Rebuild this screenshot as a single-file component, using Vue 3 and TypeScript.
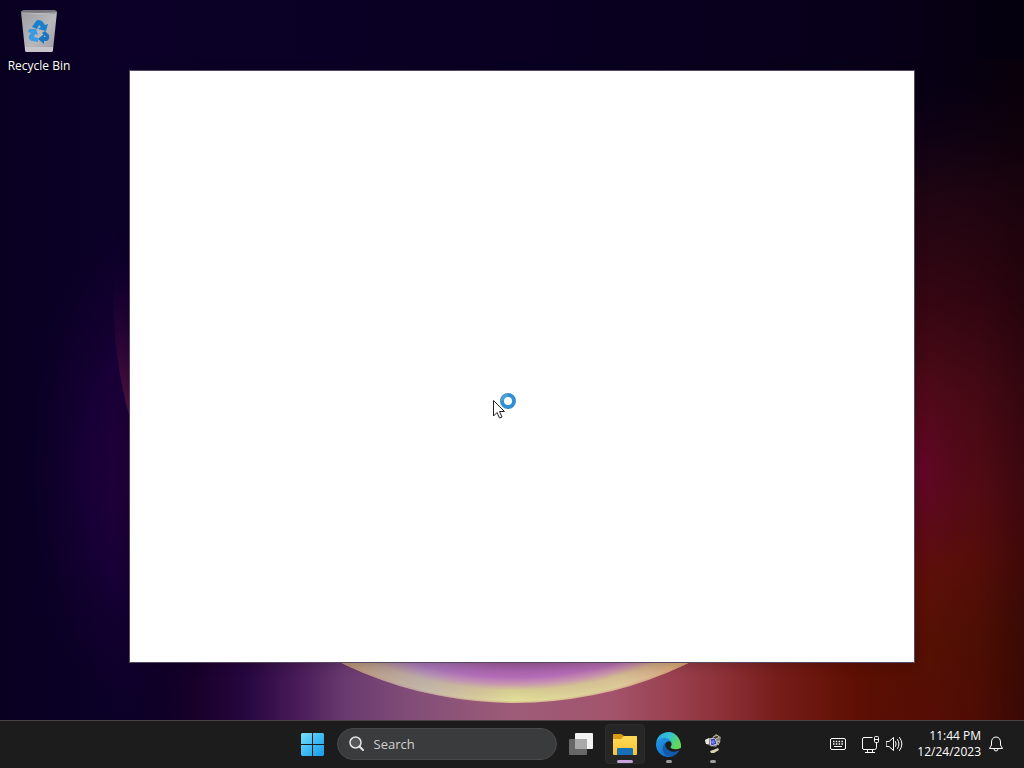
<script setup lang="ts">
import { ref } from 'vue'

interface RunningApp {
  id: string
  name: string
  state: 'none' | 'active' | 'open'
}

const query = ref('')
const time = '11:44 PM'
const date = '12/24/2023'
const apps: RunningApp[] = [
  { id: 'taskview', name: 'Task view', state: 'none' },
  { id: 'explorer', name: 'File Explorer', state: 'active' },
  { id: 'edge', name: 'Microsoft Edge', state: 'open' },
  { id: 'setup', name: 'Setup', state: 'open' },
]
</script>

<template>
  <div class="screen">
    <main class="desktop">
      <svg class="wallpaper" viewBox="0 0 1024 720" preserveAspectRatio="none" aria-hidden="true">
        <defs>
          <linearGradient id="base" x1="0" y1="0" x2="1" y2="0">
            <stop offset="0" stop-color="#080021" />
            <stop offset="0.12" stop-color="#0c0028" />
            <stop offset="0.5" stop-color="#090022" />
            <stop offset="0.85" stop-color="#08001a" />
            <stop offset="1" stop-color="#04000c" />
          </linearGradient>
          <radialGradient id="violet">
            <stop offset="0" stop-color="#25003c" />
            <stop offset="0.5" stop-color="#190038" stop-opacity="0.8" />
            <stop offset="1" stop-color="#10002c" stop-opacity="0" />
          </radialGradient>
          <linearGradient id="red" gradientUnits="userSpaceOnUse" x1="0" y1="60" x2="0" y2="720">
            <stop offset="0" stop-color="#0a0015" stop-opacity="0" />
            <stop offset="0.2" stop-color="#1f0512" />
            <stop offset="0.36" stop-color="#340612" />
            <stop offset="0.5" stop-color="#4c0a16" />
            <stop offset="0.65" stop-color="#5c0c16" />
            <stop offset="0.76" stop-color="#5e0f0a" />
            <stop offset="0.88" stop-color="#551003" />
            <stop offset="1" stop-color="#560d04" />
          </linearGradient>
          <linearGradient id="dim" gradientUnits="userSpaceOnUse" x1="930" y1="0" x2="1024" y2="0">
            <stop offset="0" stop-color="#100004" stop-opacity="0" />
            <stop offset="0.5" stop-color="#100004" stop-opacity="0.12" />
            <stop offset="1" stop-color="#100004" stop-opacity="0.4" />
          </linearGradient>
          <radialGradient id="magenta">
            <stop offset="0" stop-color="#64052c" stop-opacity="0.8" />
            <stop offset="1" stop-color="#50051c" stop-opacity="0" />
          </radialGradient>
          <linearGradient id="glow" gradientUnits="userSpaceOnUse" x1="130" y1="0" x2="930" y2="0">
            <stop offset="0" stop-color="#0b0022" stop-opacity="0" />
            <stop offset="0.08" stop-color="#170029" />
            <stop offset="0.15" stop-color="#280840" />
            <stop offset="0.21" stop-color="#491b58" />
            <stop offset="0.27" stop-color="#6a3b70" />
            <stop offset="0.35" stop-color="#814d78" />
            <stop offset="0.48" stop-color="#9d5c78" />
            <stop offset="0.6" stop-color="#a3546c" />
            <stop offset="0.69" stop-color="#983e4c" />
            <stop offset="0.75" stop-color="#8a2e34" />
            <stop offset="0.81" stop-color="#761d1a" />
            <stop offset="0.9" stop-color="#601004" />
            <stop offset="1" stop-color="#540e04" stop-opacity="0" />
          </linearGradient>
          <radialGradient id="orb" gradientUnits="userSpaceOnUse" cx="515" cy="306" r="397">
            <stop offset="0" stop-color="#9a55a0" />
            <stop offset="0.9" stop-color="#a05c9e" />
            <stop offset="0.935" stop-color="#b46cb8" />
            <stop offset="0.952" stop-color="#c896b0" />
            <stop offset="0.968" stop-color="#d6cd90" />
            <stop offset="0.994" stop-color="#e2df98" />
            <stop offset="1" stop-color="#d9b88c" />
          </radialGradient>
          <linearGradient id="orbTint" gradientUnits="userSpaceOnUse" x1="336" y1="0" x2="690" y2="0">
            <stop offset="0" stop-color="#b98862" stop-opacity="0.9" />
            <stop offset="0.25" stop-color="#9d88bd" stop-opacity="0.45" />
            <stop offset="0.5" stop-color="#b070b8" stop-opacity="0" />
            <stop offset="0.8" stop-color="#c87898" stop-opacity="0.2" />
            <stop offset="1" stop-color="#d89860" stop-opacity="0.8" />
          </linearGradient>
          <linearGradient id="rim" x1="0" y1="0" x2="0" y2="1">
            <stop offset="0" stop-color="#28083c" stop-opacity="0" />
            <stop offset="0.4" stop-color="#38083a" stop-opacity="0.4" />
            <stop offset="1" stop-color="#58183e" />
          </linearGradient>
          <clipPath id="lower"><rect x="300" y="600" width="430" height="120" /></clipPath>
        </defs>
        <rect width="1024" height="720" fill="url(#base)" />
        <ellipse cx="145" cy="470" rx="125" ry="260" fill="url(#violet)" />
        <rect x="800" y="60" width="224" height="660" fill="url(#red)" />
        <ellipse cx="922" cy="470" rx="60" ry="110" fill="url(#magenta)" />
        <rect x="880" y="60" width="144" height="660" fill="url(#dim)" />
        <rect x="130" y="640" width="800" height="80" fill="url(#glow)" />
        <path d="M117 260Q107 340 131 422L140 422V260Z" fill="url(#rim)" />
        <g clip-path="url(#lower)">
          <circle cx="515" cy="306" r="397" fill="url(#orb)" />
          <circle cx="515" cy="306" r="397" fill="url(#orbTint)" />
        </g>
      </svg>

      <a class="shortcut" href="#recycle-bin">
        <svg width="38" height="44" viewBox="0 0 38 44" aria-hidden="true">
          <defs>
            <linearGradient id="bin" x1="0" y1="0" x2="1" y2="1">
              <stop offset="0" stop-color="#9c9ba0" />
              <stop offset="0.55" stop-color="#b9b8bd" />
              <stop offset="1" stop-color="#9c9aa2" />
            </linearGradient>
          </defs>
          <path d="M1 3Q2 1 6 1H32Q36 1 37 3L33 41Q33 43 31 43H7Q5 43 5 41Z" fill="url(#bin)" />
          <path d="M1 3Q2 1 6 1H32Q36 1 37 3L35 5H3Z" fill="#77757c" />
          <path d="M2 4Q19 5 36 4" fill="none" stroke="#c4c3c8" stroke-width="1" />
          <path d="M5 38H33V41Q33 43 31 43H7Q5 43 5 41Z" fill="#c8c5ca" />
          <path d="M12 18L16 12Q18 10 22 12L25 16L28 15L26 22L18 20L21 18L19 16L17 20Z" fill="#1b80cc" />
          <path d="M9 20L16 20L18 26L15 25L14 28L18 29V33L12 32Q8 31 9 27L11 24L8 23Z" fill="#3a9be0" />
          <path d="M25 22L29 26Q30 30 27 32H24V35L18 30L24 25V28L26 28L22 24Z" fill="#1a76c2" />
        </svg>
        <span>Recycle Bin</span>
      </a>

      <section class="window" aria-label="Loading window"></section>

      <svg class="pointer" width="24" height="30" viewBox="0 0 24 30" aria-hidden="true">
        <circle cx="16" cy="10" r="6" fill="none" stroke="#338fd3" stroke-width="4" />
        <path d="M10 10A6 6 0 0 1 16 4" fill="none" stroke="#4aa0da" stroke-width="3" />
        <path d="M1.500 9.500V25L5 21.500L7.500 27L10 26L7.500 20.500H12.500Z" fill="#fff" stroke="#222" stroke-width="1" />
      </svg>
    </main>

    <footer class="taskbar">
      <nav class="center" aria-label="Taskbar">
        <button class="task" type="button" aria-label="Start">
          <svg width="24" height="24" viewBox="0 0 24 24" aria-hidden="true">
            <defs>
              <linearGradient id="start" x1="0" y1="0" x2="24" y2="24" gradientUnits="userSpaceOnUse">
                <stop offset="0" stop-color="#80e4fd" />
                <stop offset="0.5" stop-color="#42bdf3" />
                <stop offset="1" stop-color="#159cec" />
              </linearGradient>
            </defs>
            <path d="M2 1H12V12H1V2ZM13 1H23L24 2V12H13ZM1 13H12V24H2L1 23ZM13 13H24V23L23 24H13Z" fill="url(#start)" />
          </svg>
        </button>
        <label class="search">
          <svg width="16" height="16" viewBox="0 0 16 16" aria-hidden="true">
            <circle cx="6.500" cy="6.500" r="5.500" fill="#56585a" stroke="#e6e6e6" stroke-width="1.500" />
            <path d="M10.500 10.500L14 14" stroke="#e6e6e6" stroke-width="2" stroke-linecap="round" />
          </svg>
          <input v-model="query" type="text" placeholder="Search" aria-label="Search" />
        </label>
        <button v-for="app in apps" :key="app.id" class="task" :class="app.state" type="button" :aria-label="app.name">
          <svg v-if="app.id === 'taskview'" width="24" height="22" viewBox="0 0 24 22" aria-hidden="true">
            <rect x="6" y="0" width="18" height="16" rx="1" fill="#f1f1f1" />
            <rect x="0" y="6" width="18" height="16" rx="1" fill="#676767" />
            <path d="M6 6H18V16H6Z" fill="#a9a9a9" />
          </svg>
          <svg v-else-if="app.id === 'explorer'" width="26" height="24" viewBox="0 0 26 24" aria-hidden="true">
            <defs>
              <linearGradient id="folder" x1="0" y1="0" x2="0" y2="1">
                <stop offset="0" stop-color="#ffda58" />
                <stop offset="1" stop-color="#fac331" />
              </linearGradient>
            </defs>
            <path d="M1 3Q1 2 2 2H9L12 4H24Q25 4 25 5V10H1Z" fill="#d99b13" />
            <path d="M1 7H9L12 4H24Q25 4 25 5V22Q25 23 24 23H2Q1 23 1 22Z" fill="url(#folder)" />
            <path d="M5 23V17Q5 16 6 16H20Q21 16 21 17V23Z" fill="#176fba" />
          </svg>
          <svg v-else-if="app.id === 'edge'" width="25" height="25" viewBox="0 0 256 256" aria-hidden="true">
            <defs>
              <linearGradient id="edgeTop" x1="0" y1="0" x2="1" y2="0.4">
                <stop offset="0" stop-color="#2ba8ea" />
                <stop offset="0.5" stop-color="#32c0d8" />
                <stop offset="1" stop-color="#62d957" />
              </linearGradient>
              <linearGradient id="edgeSide" x1="0" y1="0" x2="0.6" y2="1">
                <stop offset="0" stop-color="#229de7" />
                <stop offset="1" stop-color="#1270cc" />
              </linearGradient>
            </defs>
            <path d="M231 190a94 94 0 0 1-11 5 102 102 0 0 1-36 6c-47 0-89-32-89-74a31 31 0 0 1 17-27c-43 2-54 47-54 73 0 74 69 82 83 82 8 0 20-2 27-5h1a128 128 0 0 0 67-53 4 4 0 0 0-5-7z" fill="#145aac" />
            <path d="M106 241a79 79 0 0 1-23-21 81 81 0 0 1 29-120c3-1 9-4 16-4a32 32 0 0 1 26 13c-2-20-30-61-90-61C23 48 0 102 0 128c0 69 55 128 128 128 14 0 28-2 41-7a76 76 0 0 1-63-8z" fill="url(#edgeSide)" />
            <path d="M152 149c-1 1-4 3-4 7 0 3 2 6 6 9 20 14 58 12 58 12a83 83 0 0 0 42-12 85 85 0 0 0 2-37C249 67 200 0 128 0 61 0 2 50 0 126c0-37 37-66 80-66 4 0 24 0 42 10 17 9 25 20 31 30 6 11 7 24 7 29s-3 13-8 20z" fill="url(#edgeTop)" />
          </svg>
          <svg v-else width="18" height="22" viewBox="0 0 18 22" aria-hidden="true">
            <path d="M1 7L5 5L8 5L12 1L17 4L16 9L12 14L7 13L2 11Z" fill="#85867a" />
            <path d="M1 7L5 5V11L2 11Z" fill="#e9e6dc" />
            <path d="M6 6L11 5L13 11L7 13Z" fill="#3b38b4" stroke="#c8c7d8" stroke-width="1" />
            <path d="M7 8L10 7L11 10L8 11Z" fill="#7286e8" />
            <path d="M9 4L13 2L15 4L12 6M13 9L16 8L14 12Z" fill="#45422e" stroke="#bfbca0" stroke-width="1" />
            <path d="M6 18L9 17L14 15L15 17L10 20H7Z" fill="#d8d3b5" />
          </svg>
          <span v-if="app.state !== 'none'" class="mark"></span>
        </button>
      </nav>

      <div class="tray">
        <button type="button" class="icon" aria-label="Touch keyboard">
          <svg width="16" height="12" viewBox="0 0 16 12" fill="none" stroke="#fff" aria-hidden="true">
            <rect x=".5" y=".5" width="15" height="11" rx="1.500" />
            <path d="M3 3.500H13M3 6H13" stroke-width="1.500" stroke-dasharray="1.500 1.300" />
            <path d="M4 8.500H12" />
          </svg>
        </button>
        <button type="button" class="status" aria-label="Network and volume">
          <svg width="17" height="17" viewBox="0 0 17 17" fill="none" stroke="#fff" aria-hidden="true">
            <path d="M10.500 1.500H2Q.5 1.500 .5 3V12Q.5 13.500 2 13.500H12.500Q14.500 13.500 14.500 11.500V7" />
            <path d="M5.500 13.500V16M10.500 13.500V16M3 16.500H13" />
            <rect x="12.500" y=".5" width="4" height="6" rx="1" />
            <path d="M12.500 3.500H16.500" />
          </svg>
          <svg width="17" height="16" viewBox="0 0 17 16" fill="none" stroke="#fff" stroke-linecap="round" stroke-linejoin="round" aria-hidden="true">
            <path d="M.5 5.500H3L7.500 1.500V14.500L3 10.500H.5Z" />
            <path d="M9.500 5.500Q11 8 9.500 10.500M11.500 3.500Q14.500 8 11.500 12.500M13.500 1.500Q18.500 8 13.500 14.500" />
          </svg>
        </button>
        <button type="button" class="clock">
          <time>{{ time }}</time>
          <time>{{ date }}</time>
        </button>
        <button type="button" class="icon" aria-label="Notifications">
          <svg width="14" height="16" viewBox="0 0 14 16" fill="none" stroke="#fff" stroke-linejoin="round" aria-hidden="true">
            <path d="M7 1C4 1 2.500 3.500 2.500 6V9L.5 12.500H13.500L11.500 9V6C11.500 3.500 10 1 7 1Z" />
            <path d="M5 12.500Q5 15 7 15Q9 15 9 12.500" />
          </svg>
        </button>
      </div>
    </footer>
  </div>
</template>

<style>
body {
  margin: 0;
  background: #1c1c1c;
}
</style>

<style scoped>
.screen {
  display: flex;
  flex-direction: column;
  height: 100vh;
  overflow: hidden;
  font: 12px/16px "Open Sans", "Noto Sans", sans-serif;
  color: #fff;
}
button {
  padding: 0;
  border: 0;
  background: none;
  color: inherit;
  font: inherit;
}
svg {
  display: block;
  flex: none;
}
.desktop {
  position: relative;
  flex: 1;
  min-height: 0;
}
.wallpaper {
  position: absolute;
  inset: 0;
  width: 100%;
  height: 100%;
}
.shortcut {
  position: absolute;
  top: 9px;
  left: 2px;
  display: flex;
  flex-direction: column;
  align-items: center;
  gap: 5px;
  width: 74px;
  color: #fff;
  text-decoration: none;
  white-space: nowrap;
  text-shadow: 0 1px 2px #000;
}
.window {
  position: absolute;
  inset: 70px 109px 57px 129px;
  border: 1px solid #55485f;
  background: #fff;
  box-shadow: 0 2px 12px rgba(0, 0, 0, 0.2);
}
.pointer {
  position: absolute;
  top: 391px;
  left: 492px;
}
.taskbar {
  display: grid;
  grid-template-columns: 1fr auto 1fr;
  height: 48px;
  background: #1c1c1c;
  box-shadow: inset 0 1px #494346;
}
.center {
  grid-column: 2;
  display: flex;
  align-items: center;
}
.task {
  position: relative;
  display: grid;
  place-items: center;
  width: 44px;
  height: 48px;
}
.active::before {
  content: "";
  position: absolute;
  inset: 4px 2px;
  border: 1px solid #2c2c2c;
  border-radius: 4px;
  background: #262626;
}
.active svg {
  position: relative;
}
.mark {
  position: absolute;
  bottom: 5px;
  left: 50%;
  width: 6px;
  height: 3px;
  border-radius: 2px;
  background: #9c9c9c;
  transform: translateX(-50%);
}
.active .mark {
  width: 16px;
  background: #c9a2da;
}
.search {
  display: flex;
  align-items: center;
  gap: 9px;
  box-sizing: border-box;
  width: 220px;
  height: 32px;
  margin: 0 2px 0 3px;
  padding: 0 11px;
  border: 1px solid #484848;
  border-radius: 16px;
  background: #3a3b3c;
}
.search input {
  flex: 1;
  min-width: 0;
  padding: 0;
  border: 0;
  outline: 0;
  background: none;
  color: #fff;
  font: 13px/20px "Open Sans", "Noto Sans", sans-serif;
}
.search input::placeholder {
  color: #d0d0d0;
  opacity: 1;
}
.tray {
  display: flex;
  justify-content: flex-end;
  align-items: center;
  padding-right: 21px;
}
.status {
  display: flex;
  align-items: center;
  gap: 7px;
  margin: 0 14px 0 16px;
}
.clock {
  display: flex;
  flex-direction: column;
  align-items: flex-end;
  margin-right: 8px;
  white-space: nowrap;
}
</style>
